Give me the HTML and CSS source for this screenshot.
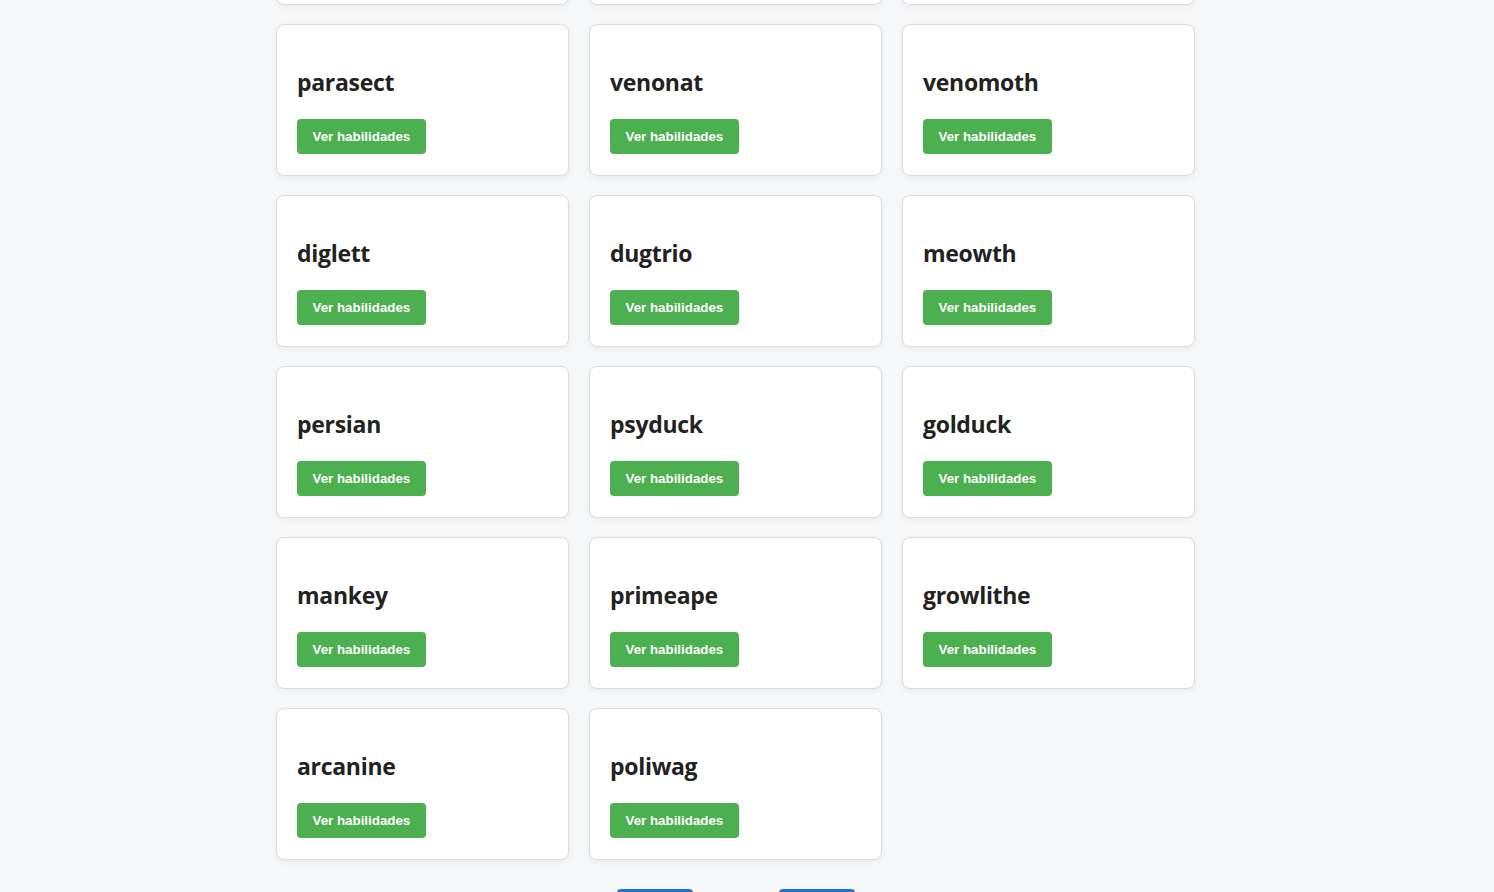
FILE: index.html
```html
<!DOCTYPE html>
<html lang="pt">
<head>
<meta charset="utf-8">
<title>Pokémon</title>
<link rel="stylesheet" href="styles.css">
</head>
<body>
<main class="container">
  <section class="grid">
    <div class="card"><h2 class="name">paras</h2><button class="btn">Ver habilidades</button></div>
    <div class="card"><h2 class="name">vileplume</h2><button class="btn">Ver habilidades</button></div>
    <div class="card"><h2 class="name">gloom</h2><button class="btn">Ver habilidades</button></div>
    <div class="card"><h2 class="name">parasect</h2><button class="btn">Ver habilidades</button></div>
    <div class="card"><h2 class="name">venonat</h2><button class="btn">Ver habilidades</button></div>
    <div class="card"><h2 class="name">venomoth</h2><button class="btn">Ver habilidades</button></div>
    <div class="card"><h2 class="name">diglett</h2><button class="btn">Ver habilidades</button></div>
    <div class="card"><h2 class="name">dugtrio</h2><button class="btn">Ver habilidades</button></div>
    <div class="card"><h2 class="name">meowth</h2><button class="btn">Ver habilidades</button></div>
    <div class="card"><h2 class="name">persian</h2><button class="btn">Ver habilidades</button></div>
    <div class="card"><h2 class="name">psyduck</h2><button class="btn">Ver habilidades</button></div>
    <div class="card"><h2 class="name">golduck</h2><button class="btn">Ver habilidades</button></div>
    <div class="card"><h2 class="name">mankey</h2><button class="btn">Ver habilidades</button></div>
    <div class="card"><h2 class="name">primeape</h2><button class="btn">Ver habilidades</button></div>
    <div class="card"><h2 class="name">growlithe</h2><button class="btn">Ver habilidades</button></div>
    <div class="card"><h2 class="name">arcanine</h2><button class="btn">Ver habilidades</button></div>
    <div class="card"><h2 class="name">poliwag</h2><button class="btn">Ver habilidades</button></div>
  </section>
  <nav class="pager">
    <button class="page-btn">Anterior</button>
    <span class="page-info">Página 2</span>
    <button class="page-btn">Próxima</button>
  </nav>
</main>
</body>
</html>
```
FILE: styles.css
```css
html, body {
  margin: 0;
  padding: 0;
  background: #f7f8fa;
}
body {
  font-family: "Open Sans", "Liberation Sans", sans-serif;
  color: #222;
}
.container {
  width: 919px;
  margin: -147px 0 0 276px;
}
.grid {
  display: grid;
  grid-template-columns: repeat(3, 1fr);
  column-gap: 20px;
  row-gap: 19px;
}
.card {
  background: #fff;
  border: 1px solid #dcdcdc;
  border-radius: 8px;
  box-shadow: 0 2px 6px rgba(0, 0, 0, 0.06);
  padding: 20px;
  height: 152px;
  box-sizing: border-box;
  display: flex;
  flex-direction: column;
  align-items: flex-start;
}
.name {
  font-family: "Open Sans", sans-serif;
  font-weight: 700;
  font-size: 23px;
  line-height: 31px;
  margin: 22px 0 21px;
  color: #222;
  letter-spacing: -0.3px;
}
.btn {
  background: #4caf50;
  color: #fff;
  border: none;
  border-radius: 4px;
  font-family: "Liberation Sans", Arial, sans-serif;
  font-weight: 700;
  font-size: 13.33px;
  line-height: 15px;
  padding: 10px 15.5px;
  cursor: pointer;
}
.pager {
  display: flex;
  justify-content: center;
  align-items: center;
  gap: 10px;
  margin-top: 29px;
  padding-bottom: 30px;
}
.page-btn {
  width: 76px;
  background: #1976d2;
  color: #fff;
  border: none;
  border-radius: 4px;
  font-family: "Liberation Sans", Arial, sans-serif;
  font-size: 13px;
  padding: 9px 0;
}
.page-info {
  width: 66px;
  text-align: center;
  font-family: "Liberation Sans", Arial, sans-serif;
  font-size: 13px;
}
```
